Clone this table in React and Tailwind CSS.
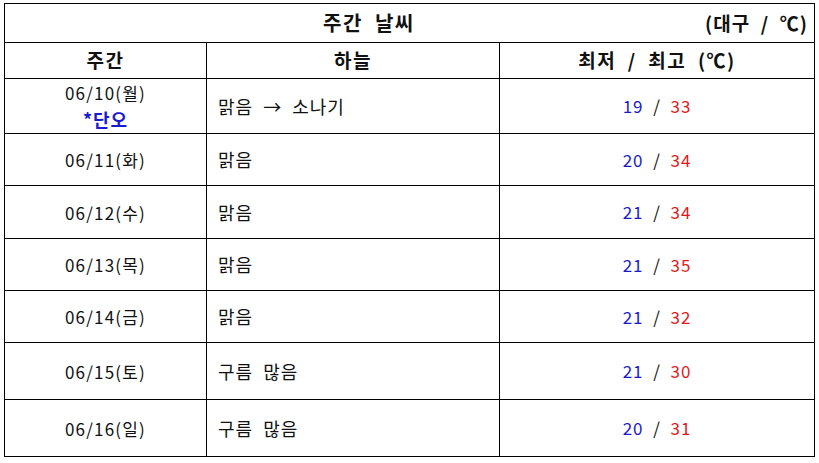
import React from "react";

const rows = [
  { date: "06/10(월)", note: "*단오", sky: "맑음 → 소나기", lo: 19, hi: 33, h: "h-[54px]" },
  { date: "06/11(화)", sky: "맑음", lo: 20, hi: 34, h: "h-[52px]" },
  { date: "06/12(수)", sky: "맑음", lo: 21, hi: 34, h: "h-[53px]" },
  { date: "06/13(목)", sky: "맑음", lo: 21, hi: 35, h: "h-[52px]" },
  { date: "06/14(금)", sky: "맑음", lo: 21, hi: 32, h: "h-[52px]" },
  { date: "06/15(토)", sky: "구름 많음", lo: 21, hi: 30, h: "h-[57px]" },
  { date: "06/16(일)", sky: "구름 많음", lo: 20, hi: 31, h: "h-[57px]" },
];

const cell = "border-[1.5px] border-black";

export default function App() {
  return (
    <div
      className="w-[819px] h-[463px] bg-white pt-[3px] pl-[4px] text-[#111]"
      style={{ fontFamily: '"Noto Sans CJK KR", "Noto Sans", sans-serif' }}
    >
      <table className="border-collapse w-[810px] table-fixed">
        <colgroup>
          <col className="w-[202px]" />
          <col className="w-[293px]" />
          <col className="w-[315px]" />
        </colgroup>
        <tbody>
          <tr className="h-[39px]">
            <td colSpan={3} className={`${cell} p-0`}>
              <div className="flex items-center justify-between font-bold whitespace-pre">
                <span className="ml-[318px] text-[20px] tracking-[1.5px]">주간  날씨</span>
                <span className="mr-[6px] text-[19px] tracking-[1px]">(대구  /  ℃)</span>
              </div>
            </td>
          </tr>
          <tr className="h-[36px] font-bold text-[19px] tracking-[1.5px] whitespace-pre">
            <td className={`${cell} text-center`}>주간</td>
            <td className={`${cell} text-center`}>하늘</td>
            <td className={`${cell} text-center`}>최저  /  최고  (℃)</td>
          </tr>
          {rows.map((r) => (
            <tr key={r.date} className={`${r.h} text-[17px]`}>
              <td className={`${cell} text-center leading-[27px]`}>
                <div className="tracking-[1.2px]">{r.date}</div>
                {r.note && (
                  <div className="font-bold text-[#1a1ad0] text-[18px] tracking-[1px]">{r.note}</div>
                )}
              </td>
              <td className={`${cell} pl-[11px] whitespace-pre tracking-[1px] text-[18px]`}>
                {r.sky.split(" ").join("  ")}
              </td>
              <td className={`${cell} text-center whitespace-pre tracking-[1px]`}>
                <span className="text-[#1a1acc]">{r.lo}</span>
                <span>  /  </span>
                <span className="text-[#e01a1a]">{r.hi}</span>
              </td>
            </tr>
          ))}
        </tbody>
      </table>
    </div>
  );
}
